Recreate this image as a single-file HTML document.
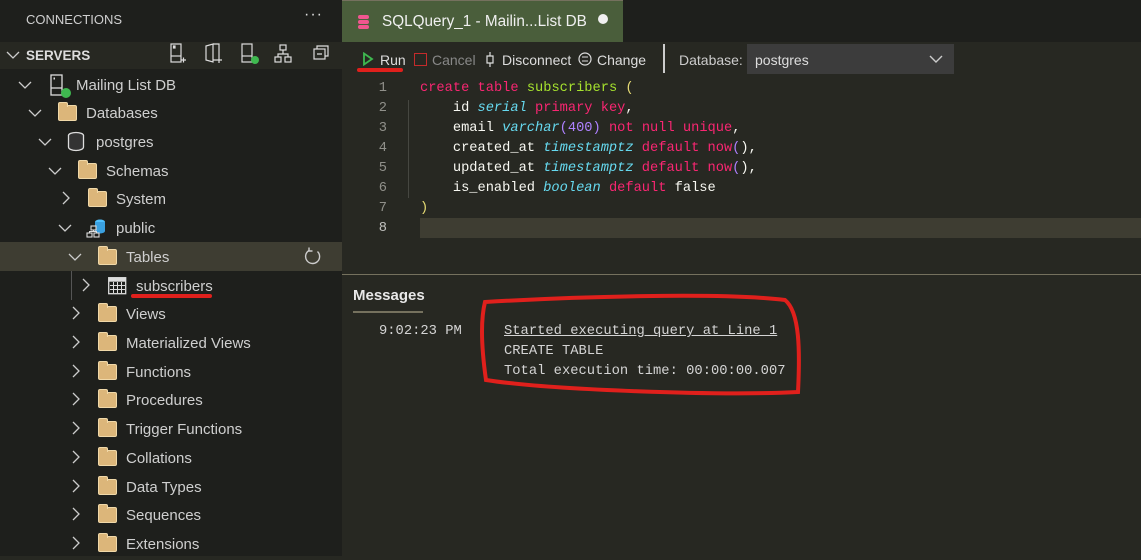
<!DOCTYPE html>
<html><head><meta charset="utf-8"><style>
*{margin:0;padding:0;box-sizing:border-box}
body{width:1141px;height:556px;overflow:hidden;background:#272822;font-family:"Liberation Sans",sans-serif;color:#ccc;position:relative}
.side{position:absolute;left:0;top:0;width:342px;height:556px;background:#1e1f1c}
.abs{position:absolute}
.row{position:absolute;left:0;width:342px;height:29px;font-size:15px;color:#cfcfcf;line-height:31px}
.row span{position:absolute}
.fold{position:absolute;width:19px;height:16px;top:7px;background:#dcb67a;border:1px solid #f0d8a8;border-radius:2px}
.fold:before{content:"";position:absolute;left:-1px;top:-4px;width:8px;height:4px;background:#dcb67a;border:1px solid #f0d8a8;border-bottom:none;border-radius:2px 2px 0 0}
.chev{position:absolute;top:8px}
.code{position:absolute;left:342px;top:79px;font-family:"Liberation Mono",monospace;font-size:13.7px;line-height:20px;white-space:pre;color:#f8f8f2}
.ln{position:absolute;left:342px;width:45px;text-align:right;color:#90908a;font-family:"Liberation Mono",monospace;font-size:13.7px;line-height:20px}
.k{color:#f92672}.t{color:#66d9ef;font-style:italic}.n{color:#ae81ff}.g{color:#a6e22e}.p{color:#e6db74}
.msg{font-family:"Liberation Mono",monospace;font-size:13.8px;color:#d4d4d4;position:absolute;line-height:20px}
</style></head><body>
<div class="side">
<div class="abs" style="left:26px;top:12px;font-size:13px;color:#cfcfcf">CONNECTIONS</div>
<div class="abs" style="left:304px;top:6px;font-size:16px;color:#ddd;letter-spacing:1px">···</div>
<div class="abs" style="left:0;top:42px;width:342px;height:27px;background:#272822"></div>
<svg class="abs" style="left:6px;top:50px" width="14" height="10"><path d="M1 2 L7 8 L13 2" stroke="#ccc" fill="none" stroke-width="1.3"/></svg>
<div class="abs" style="left:26px;top:48px;font-size:13.5px;font-weight:bold;color:#ddd">SERVERS</div>
<svg class="abs" style="left:168px;top:42px" width="165" height="24" fill="none" stroke="#ddd" stroke-width="1.2">
<rect x="3" y="2" width="10" height="18"/><line x1="3" y1="14" x2="13" y2="14"/><rect x="5.5" y="4" width="1.5" height="2" fill="#ddd"/><path d="M13 18h5M15.5 15.5v5"/>
<path d="M38 4 L45 2 V20 L38 18 Z"/><path d="M45 2 h6 v16 M45 18 h9 M51 15v6"/>
<rect x="74" y="2" width="10" height="18"/><line x1="74" y1="14" x2="84" y2="14"/><circle cx="87" cy="18" r="4" fill="#3fb950" stroke="none"/>
<rect x="112" y="3" width="6" height="5"/><rect x="107" y="15" width="6" height="5"/><rect x="117" y="15" width="6" height="5"/><path d="M115 8v4M110 15v-3h10v3"/>
<rect x="146" y="7" width="11" height="10"/><path d="M149 7V4h11v10h-3M149 12h5"/>
</svg>
<div class="row" style="top:70px"><svg class="chev" style="left:18px;top:10px" width="14" height="10"><path d="M1 2 L7 8 L13 2" stroke="#ccc" fill="none" stroke-width="1.3"/></svg>
<svg class="abs" style="left:49px;top:3px" width="26" height="26"><rect x="2" y="2" width="11" height="20" fill="none" stroke="#ddd" stroke-width="1.3"/><line x1="2" y1="15" x2="13" y2="15" stroke="#ddd" stroke-width="1.3"/><rect x="4.5" y="4.5" width="1.5" height="2" fill="#ddd"/><circle cx="17" cy="20" r="5" fill="#3fb950"/></svg><span style="left:76px">Mailing List DB</span></div>
<div class="row" style="top:98px"><svg class="chev" style="left:28px;top:10px" width="14" height="10"><path d="M1 2 L7 8 L13 2" stroke="#ccc" fill="none" stroke-width="1.3"/></svg><div class="fold" style="left:58px"></div><span style="left:86px">Databases</span></div>
<div class="row" style="top:127px"><svg class="chev" style="left:38px;top:10px" width="14" height="10"><path d="M1 2 L7 8 L13 2" stroke="#ccc" fill="none" stroke-width="1.3"/></svg>
<svg class="abs" style="left:67px;top:4px" width="20" height="22"><ellipse cx="9" cy="4.5" rx="7.5" ry="3" fill="#333" stroke="#ddd" stroke-width="1.3"/><path d="M1.5 4.5V16c0 2 3.5 3.5 7.5 3.5s7.5-1.5 7.5-3.5V4.5" fill="#333" stroke="#ddd" stroke-width="1.3"/></svg><span style="left:96px">postgres</span></div>
<div class="row" style="top:156px"><svg class="chev" style="left:48px;top:10px" width="14" height="10"><path d="M1 2 L7 8 L13 2" stroke="#ccc" fill="none" stroke-width="1.3"/></svg><div class="fold" style="left:78px"></div><span style="left:106px">Schemas</span></div>
<div class="row" style="top:184px"><svg class="chev" style="left:61px;top:7px" width="10" height="14"><path d="M2 1 L8 7 L2 13" stroke="#ccc" fill="none" stroke-width="1.3"/></svg><div class="fold" style="left:88px"></div><span style="left:116px">System</span></div>
<div class="row" style="top:213px"><svg class="chev" style="left:58px;top:10px" width="14" height="10"><path d="M1 2 L7 8 L13 2" stroke="#ccc" fill="none" stroke-width="1.3"/></svg>
<svg class="abs" style="left:86px;top:4px" width="22" height="22"><ellipse cx="14" cy="5" rx="5" ry="2.5" fill="#4fc1ff"/><rect x="9" y="5" width="10" height="9" fill="#3aa0e0"/><ellipse cx="14" cy="14" rx="5" ry="2.5" fill="#3aa0e0"/><g fill="#1e1f1c" stroke="#ddd" stroke-width="1.1"><rect x="5" y="9" width="5" height="4"/><rect x="1" y="16" width="5" height="4"/><rect x="8" y="16" width="5" height="4"/></g><path d="M7.5 13v2M3.5 16v-1.5h7V16" stroke="#ddd" fill="none"/></svg><span style="left:116px">public</span></div>
<div class="row" style="top:242px;background:#3e3d32"><svg class="chev" style="left:68px;top:10px" width="14" height="10"><path d="M1 2 L7 8 L13 2" stroke="#ccc" fill="none" stroke-width="1.3"/></svg><div class="fold" style="left:98px"></div><span style="left:126px">Tables</span>
<svg class="abs" style="left:303px;top:5px" width="20" height="20"><path d="M14.5 4.5 A7 7 0 1 1 6 3.5" stroke="#ccc" fill="none" stroke-width="1.4"/><path d="M6 0.5 V4 H9.5" stroke="#ccc" fill="none" stroke-width="1.4"/></svg></div>
<div class="abs" style="left:71px;top:271px;width:1px;height:29px;background:#555"></div>
<div class="row" style="top:271px"><svg class="chev" style="left:81px;top:7px" width="10" height="14"><path d="M2 1 L8 7 L2 13" stroke="#ccc" fill="none" stroke-width="1.3"/></svg>
<svg class="abs" style="left:108px;top:6px" width="20" height="18"><rect x="0.7" y="0.7" width="17" height="16" fill="#1e1f1c" stroke="#ddd" stroke-width="1.3"/><rect x="0.7" y="0.7" width="17" height="4" fill="#ddd"/><path d="M2 8.5h15M2 12.5h15M5.5 5v11M9.5 5v11M13.5 5v11" stroke="#ddd"/></svg><span style="left:136px">subscribers</span></div>
<div class="abs" style="left:131px;top:294px;width:81px;height:4px;background:#e0201c;border-radius:2px"></div>
<div class="row" style="top:299px"><svg class="chev" style="left:71px;top:7px" width="10" height="14"><path d="M2 1 L8 7 L2 13" stroke="#ccc" fill="none" stroke-width="1.3"/></svg><div class="fold" style="left:98px"></div><span style="left:126px">Views</span></div>
<div class="row" style="top:328px"><svg class="chev" style="left:71px;top:7px" width="10" height="14"><path d="M2 1 L8 7 L2 13" stroke="#ccc" fill="none" stroke-width="1.3"/></svg><div class="fold" style="left:98px"></div><span style="left:126px">Materialized Views</span></div>
<div class="row" style="top:357px"><svg class="chev" style="left:71px;top:7px" width="10" height="14"><path d="M2 1 L8 7 L2 13" stroke="#ccc" fill="none" stroke-width="1.3"/></svg><div class="fold" style="left:98px"></div><span style="left:126px">Functions</span></div>
<div class="row" style="top:385px"><svg class="chev" style="left:71px;top:7px" width="10" height="14"><path d="M2 1 L8 7 L2 13" stroke="#ccc" fill="none" stroke-width="1.3"/></svg><div class="fold" style="left:98px"></div><span style="left:126px">Procedures</span></div>
<div class="row" style="top:414px"><svg class="chev" style="left:71px;top:7px" width="10" height="14"><path d="M2 1 L8 7 L2 13" stroke="#ccc" fill="none" stroke-width="1.3"/></svg><div class="fold" style="left:98px"></div><span style="left:126px">Trigger Functions</span></div>
<div class="row" style="top:443px"><svg class="chev" style="left:71px;top:7px" width="10" height="14"><path d="M2 1 L8 7 L2 13" stroke="#ccc" fill="none" stroke-width="1.3"/></svg><div class="fold" style="left:98px"></div><span style="left:126px">Collations</span></div>
<div class="row" style="top:472px"><svg class="chev" style="left:71px;top:7px" width="10" height="14"><path d="M2 1 L8 7 L2 13" stroke="#ccc" fill="none" stroke-width="1.3"/></svg><div class="fold" style="left:98px"></div><span style="left:126px">Data Types</span></div>
<div class="row" style="top:500px"><svg class="chev" style="left:71px;top:7px" width="10" height="14"><path d="M2 1 L8 7 L2 13" stroke="#ccc" fill="none" stroke-width="1.3"/></svg><div class="fold" style="left:98px"></div><span style="left:126px">Sequences</span></div>
<div class="row" style="top:529px"><svg class="chev" style="left:71px;top:7px" width="10" height="14"><path d="M2 1 L8 7 L2 13" stroke="#ccc" fill="none" stroke-width="1.3"/></svg><div class="fold" style="left:98px"></div><span style="left:126px">Extensions</span></div>
</div>

<div class="abs" style="left:342px;top:0;width:799px;height:42px;background:#1e1f1c"></div>
<div class="abs" style="left:342px;top:0;width:281px;height:42px;background:#4a5e3b;border-top:1px solid #75715e"></div>
<svg class="abs" style="left:357px;top:14px" width="14" height="16"><rect x="1" y="1" width="11" height="4" rx="2" fill="#f0568f"/><rect x="1" y="6" width="11" height="4" rx="2" fill="#f0568f"/><rect x="1" y="11" width="11" height="4" rx="2" fill="#f0568f"/></svg>
<div class="abs" style="left:382px;top:13px;font-size:15.3px;color:#f0f0f0">SQLQuery_1 - Mailin...List DB</div>
<div class="abs" style="left:598px;top:14px;width:10px;height:10px;border-radius:50%;background:#f0f0f0"></div>

<svg class="abs" style="left:362px;top:52px" width="12" height="14"><path d="M2 1.5 L10 7 L2 12.5 Z" fill="none" stroke="#3fb950" stroke-width="1.8"/></svg>
<div class="abs" style="left:380px;top:52px;font-size:14px;color:#ddd">Run</div>
<div class="abs" style="left:357px;top:68px;width:46px;height:4px;background:#e0201c;border-radius:2px"></div>
<div class="abs" style="left:414px;top:53px;width:13px;height:13px;border:1.5px solid #c42b2b"></div>
<div class="abs" style="left:432px;top:52px;font-size:14px;color:#888">Cancel</div>
<svg class="abs" style="left:484px;top:51px" width="12" height="17"><path d="M6 1v4M6 12v4M3 5h6v7H3z" stroke="#ddd" fill="none" stroke-width="1.2"/></svg>
<div class="abs" style="left:502px;top:52px;font-size:14px;color:#ddd">Disconnect</div>
<svg class="abs" style="left:577px;top:51px" width="16" height="16"><circle cx="8" cy="8" r="6" fill="none" stroke="#ddd" stroke-width="1.2"/><path d="M5 6h6M11 10H5" stroke="#ddd"/></svg>
<div class="abs" style="left:597px;top:52px;font-size:14px;color:#ddd">Change</div>
<div class="abs" style="left:663px;top:44px;width:2px;height:29px;background:#ccc"></div>
<div class="abs" style="left:679px;top:52px;font-size:14px;color:#ccc">Database:</div>
<div class="abs" style="left:747px;top:44px;width:207px;height:30px;background:#3c3c3c"></div>
<div class="abs" style="left:755px;top:52px;font-size:14px;color:#ddd">postgres</div>
<svg class="abs" style="left:929px;top:54px" width="14" height="10"><path d="M1 2 L7 8 L13 2" stroke="#ccc" fill="none" stroke-width="1.4"/></svg>

<div class="ln" style="top:79px">1<br>2<br>3<br>4<br>5<br>6<br>7<br><span style="color:#c2c2bf">8</span></div>
<div class="abs" style="left:420px;top:218px;width:721px;height:20px;background:#3e3d32"></div>
<div class="abs" style="left:408px;top:100px;width:1px;height:98px;background:#464741"></div>
<div class="code" style="left:420px"><span class="k">create</span> <span class="k">table</span> <span class="g">subscribers</span> <span class="p">(</span>
    id <span class="t">serial</span> <span class="k">primary</span> <span class="k">key</span>,
    email <span class="t">varchar</span><span class="n">(400)</span> <span class="k">not</span> <span class="k">null</span> <span class="k">unique</span>,
    created_at <span class="t">timestamptz</span> <span class="k">default</span> <span class="k">now</span><span class="n">(</span>),
    updated_at <span class="t">timestamptz</span> <span class="k">default</span> <span class="k">now</span><span class="n">(</span>),
    is_enabled <span class="t">boolean</span> <span class="k">default</span> false
<span class="p">)</span></div>

<div class="abs" style="left:342px;top:274px;width:799px;height:1px;background:#75715e"></div>
<div class="abs" style="left:353px;top:287px;font-size:15px;font-weight:bold;color:#e8e8e8">Messages</div>
<div class="abs" style="left:353px;top:311px;width:70px;height:2px;background:#75715e"></div>
<div class="msg" style="left:379px;top:322px">9:02:23 PM</div>
<div class="msg" style="left:504px;top:322px"><u>Started executing query at Line 1</u><br>CREATE TABLE<br>Total execution time: 00:00:00.007</div>
<svg class="abs" style="left:470px;top:292px" width="340" height="112"><path d="M15 10 C100 5 250 0 315 8 C330 20 330 60 328 100 C250 104 80 98 16 88 C12 60 10 30 15 10 Z" fill="none" stroke="#e0201c" stroke-width="4"/></svg>
</body></html>
